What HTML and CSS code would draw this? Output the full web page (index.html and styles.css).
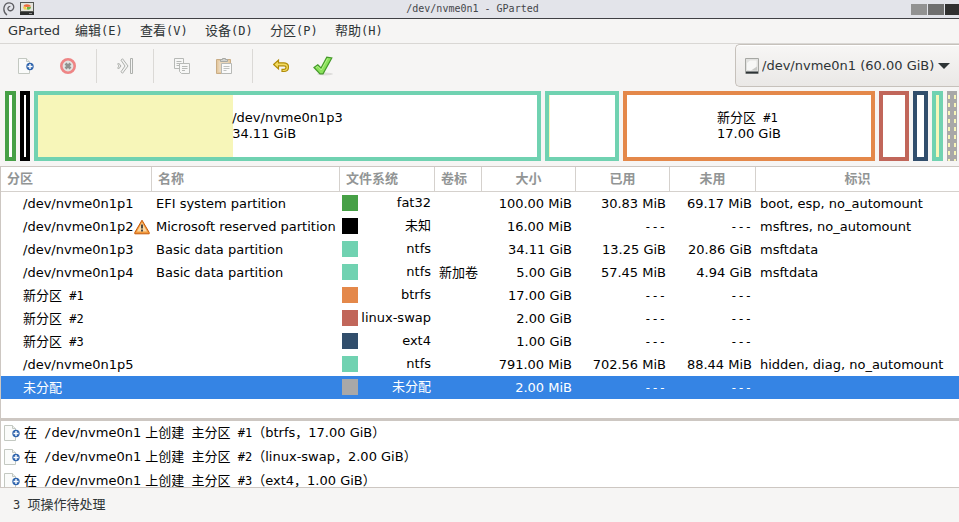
FILE: index.html
```
<!DOCTYPE html>
<html lang="zh-CN">
<head>
<meta charset="utf-8">
<title>/dev/nvme0n1 - GParted</title>
<link rel="stylesheet" href="styles.css">
</head>
<body>
<svg class="defs" aria-hidden="true">
  <symbol id="doc-new" viewBox="0 0 16 16">
    <path d="M.5.500h8l3 3v12H.5z" fill="#fafbfa" stroke="#c3c8c1"/>
    <path d="M8.500.500v3h3" fill="#eef0ed" stroke="#c3c8c1"/>
    <circle cx="12" cy="8.500" r="3.700" fill="#2f64ad"/>
    <path d="M12 6v5M9.500 8.500h5" stroke="#fff" stroke-width="1.400"/>
  </symbol>
</svg>
<header class="titlebar">
  <div class="title-icons">
    <svg width="12" height="14" viewBox="0 0 12 14" fill="none" stroke="#5d5d62" stroke-width="1.300"><path d="M4 13C1.500 11 .3 7.500 1.300 4.500 2.300 1.800 5 .6 7.500 1.100c2.600.6 3.700 3 3 5.200C9.800 8.600 7 9.500 5.500 8 4.300 6.700 5 4.500 7.300 4.300"/></svg>
    <svg width="14" height="13" viewBox="0 0 14 13"><path d="M0 0h14v13H0z" fill="#555753"/><path d="M1 1h12v8H1z" fill="#e4e4dc"/><path d="M3.500 4.500c0-3 6.500-3 7.500 0L7 5z" fill="#ef6a3a"/><path d="M3 5h3l1 2.500H4z" fill="#f3cf45"/><path d="M7 5h4c0 2-2 3-4 2.500z" fill="#6bb544"/><path d="M0 10h14v3H0z" fill="#2c2e2d"/><path d="M9 11.500h3" stroke="#888"/></svg>
  </div>
  <h1>/dev/nvme0n1 - GParted</h1>
  <div class="window-buttons">
    <button type="button" class="min" aria-label="最小化"></button>
    <button type="button" class="max" aria-label="最大化"></button>
    <button type="button" class="close" aria-label="关闭"></button>
  </div>
</header>
<nav class="menubar">
  <button type="button">GParted</button>
  <button type="button">编辑<span class="fixed">(E)</span></button>
  <button type="button">查看<span class="fixed">(V)</span></button>
  <button type="button">设备<span class="fixed">(D)</span></button>
  <button type="button">分区<span class="fixed">(P)</span></button>
  <button type="button">帮助<span class="fixed">(H)</span></button>
</nav>
<div class="toolbar">
  <button type="button" aria-label="新建"><svg width="16" height="16"><use href="#doc-new"/></svg></button>
  <button type="button" aria-label="删除"><svg width="16" height="16" viewBox="0 0 16 16"><circle cx="8" cy="8" r="6.700" fill="#e2e3e1" stroke="#ee8585" stroke-width="2.600"/><path d="M5.500 5.500l5 5M10.500 5.500l-5 5" stroke="#8f918e" stroke-width="2.600"/></svg></button>
  <span class="separator"></span>
  <button type="button" aria-label="调整大小/移动"><svg width="16" height="16" viewBox="0 0 16 16" fill="#f4f4f3" stroke="#aeb0ad"><path d="M5.500.700l5.500 7.300-5.500 7.300-1.500-1.500L8 8 4 2.200z"/><path d="M1.500 5L4 8l-2.500 3L.7 10l1.300-2L.7 6z"/><path d="M13.500.500h2v15h-2z"/></svg></button>
  <span class="separator"></span>
  <button type="button" aria-label="复制"><svg width="16" height="16" viewBox="0 0 16 16" fill="#f7f7f6" stroke="#b7b9b6"><path d="M.5.500h9v10h-9z"/><path d="M2.500 3.500h5M2.500 5.500h5M2.500 7.500h3"/><path d="M5.500 5.500h10v10h-8l-2-2z"/><path d="M8 8.500h5.500M8 10.500h5.500M8 12.500h3"/></svg></button>
  <button type="button" aria-label="粘贴"><svg width="16" height="16" viewBox="0 0 16 16"><path d="M.5 1.500h14v14H.5z" fill="#e5c9a0" stroke="#c9ac84"/><path d="M2.500 3h10v11h-10z" fill="#ead7bb"/><path d="M4.500 3.500v-2h2v-1h3v1h2v2z" fill="#d1d2cf" stroke="#a6a8a4"/><path d="M5.500 5.500h10v10h-10z" fill="#fafafa" stroke="#b7b9b6"/><path d="M7.500 8.500h6M7.500 10.500h6M7.500 12.500h3" stroke="#c0c2bf"/></svg></button>
  <span class="separator"></span>
  <button type="button" aria-label="撤销"><svg width="16" height="16" viewBox="0 0 16 16"><path d="M.6 6.500L5.500 2v2.800h5.200c3 0 4.800 1.800 4.800 4.200 0 2.600-1.800 4.500-4.500 4.500H9v-2.200h1.700c1.500 0 2.300-.8 2.300-1.800S12.300 7.800 11 7.800H5.500V11z" fill="#f3dc62" stroke="#b18c08" stroke-width="1.200"/></svg></button>
  <button type="button" aria-label="应用"><svg width="20" height="20" viewBox="0 0 20 20"><ellipse cx="12" cy="18" rx="8" ry="1.500" fill="#dedddb"/><path d="M1 11.500L4.800 8.800 8 12 13.800 1.200 18.800 2 10 17.800H7z" fill="#8ae25a" stroke="#459a2a" stroke-width="1.200"/><path d="M3 11.600l1.700-1.200L8.300 14l6.300-11.500" fill="none" stroke="#b6f08a"/></svg></button>
  <div class="device">
    <svg width="14" height="16" viewBox="0 0 14 16"><path d="M.5.500h13v15H.5z" fill="#e2e2e0" stroke="#a6a7a3"/><path d="M2 5l3-2.500h6.500v8L8 12.500H2z" fill="#f7f7f6"/><path d="M2 12l4 .5 6-4v4H2z" fill="#c9cac7"/><path d="M1 14.500h12" stroke="#2e3436" stroke-width="2"/></svg>
    <select aria-label="设备"><option>/dev/nvme0n1 (60.00 GiB)</option></select>
    <svg class="arrow" width="12" height="6" viewBox="0 0 12 6"><path d="M0 0h12L6 6z" fill="#2e3436"/></svg>
  </div>
</div>
<main>
  <div class="disk">
    <div class="part fat32" style="flex-grow:3;--used:0%"></div>
    <div class="part unknown" style="flex-grow:2;--used:0%"></div>
    <div class="part ntfs" style="flex-grow:499;--used:39%"><p>/dev/nvme0n1p3<br>34.11 GiB</p></div>
    <div class="part ntfs" style="flex-grow:66;--used:1%"></div>
    <div class="part btrfs" style="flex-grow:244;--used:0%"><p>新分区<span class="fixed"> #1</span><br>17.00 GiB</p></div>
    <div class="part swap" style="flex-grow:22;--used:0%"></div>
    <div class="part ext4" style="flex-grow:7;--used:0%"></div>
    <div class="part ntfs" style="flex-grow:3;--used:100%"></div>
    <div class="part free" style="flex-grow:2"></div>
  </div>
  <div class="table-pane">
    <table>
      <colgroup><col class="c-part"><col class="c-name"><col class="c-fs"><col class="c-label"><col class="c-size"><col class="c-size"><col class="c-unused"><col></colgroup>
      <thead><tr><th>分区</th><th>名称</th><th>文件系统</th><th>卷标</th><th class="mid">大小</th><th class="mid">已用</th><th class="mid">未用</th><th class="mid">标识</th></tr></thead>
      <tbody>
        <tr><td>/dev/nvme0n1p1</td><td>EFI system partition</td><td><div class="fs"><i class="fat32"></i>fat32</div></td><td></td><td>100.00 MiB</td><td>30.83 MiB</td><td>69.17 MiB</td><td>boot, esp, no_automount</td></tr>
        <tr><td><div class="warn">/dev/nvme0n1p2<svg width="16" height="16" viewBox="0 0 16 16"><path d="M8 1.200L15.200 13.500v1.300H.8v-1.300z" fill="#f29a3d" stroke="#c65a0a" stroke-linejoin="round"/><path d="M8 3.500L13 12.500H3z" fill="#fbd9a5"/><path d="M8 5.500v4M8 10.500v2" stroke="#3c3c3c" stroke-width="1.800"/></svg></div></td><td>Microsoft reserved partition</td><td><div class="fs"><i class="unknown"></i>未知</div></td><td></td><td>16.00 MiB</td><td><span class="fixed">---</span></td><td><span class="fixed">---</span></td><td>msftres, no_automount</td></tr>
        <tr><td>/dev/nvme0n1p3</td><td>Basic data partition</td><td><div class="fs"><i class="ntfs"></i>ntfs</div></td><td></td><td>34.11 GiB</td><td>13.25 GiB</td><td>20.86 GiB</td><td>msftdata</td></tr>
        <tr><td>/dev/nvme0n1p4</td><td>Basic data partition</td><td><div class="fs"><i class="ntfs"></i>ntfs</div></td><td>新加卷</td><td>5.00 GiB</td><td>57.45 MiB</td><td>4.94 GiB</td><td>msftdata</td></tr>
        <tr><td>新分区<span class="fixed"> #1</span></td><td></td><td><div class="fs"><i class="btrfs"></i>btrfs</div></td><td></td><td>17.00 GiB</td><td><span class="fixed">---</span></td><td><span class="fixed">---</span></td><td></td></tr>
        <tr><td>新分区<span class="fixed"> #2</span></td><td></td><td><div class="fs"><i class="swap"></i>linux-swap</div></td><td></td><td>2.00 GiB</td><td><span class="fixed">---</span></td><td><span class="fixed">---</span></td><td></td></tr>
        <tr><td>新分区<span class="fixed"> #3</span></td><td></td><td><div class="fs"><i class="ext4"></i>ext4</div></td><td></td><td>1.00 GiB</td><td><span class="fixed">---</span></td><td><span class="fixed">---</span></td><td></td></tr>
        <tr><td>/dev/nvme0n1p5</td><td></td><td><div class="fs"><i class="ntfs"></i>ntfs</div></td><td></td><td>791.00 MiB</td><td>702.56 MiB</td><td>88.44 MiB</td><td>hidden, diag, no_automount</td></tr>
        <tr class="selected"><td>未分配</td><td></td><td><div class="fs"><i class="free"></i>未分配</div></td><td></td><td>2.00 MiB</td><td><span class="fixed">---</span></td><td><span class="fixed">---</span></td><td></td></tr>
      </tbody>
    </table>
  </div>
  <ul class="operations">
    <li><svg width="16" height="16"><use href="#doc-new"/></svg><span>在<span class="fixed"> /</span>dev/nvme0n1 上创建<span class="fixed"> </span>主分区<span class="fixed"> #1</span>（btrfs，17.00 GiB）</span></li>
    <li><svg width="16" height="16"><use href="#doc-new"/></svg><span>在<span class="fixed"> /</span>dev/nvme0n1 上创建<span class="fixed"> </span>主分区<span class="fixed"> #2</span>（linux-swap，2.00 GiB）</span></li>
    <li><svg width="16" height="16"><use href="#doc-new"/></svg><span>在<span class="fixed"> /</span>dev/nvme0n1 上创建<span class="fixed"> </span>主分区<span class="fixed"> #3</span>（ext4，1.00 GiB）</span></li>
  </ul>
</main>
<footer class="status"><span><span class="fixed">3 </span>项操作待处理</span></footer>
</body>
</html>
```
FILE: styles.css
```
* { box-sizing: border-box; }

body {
  margin: 0;
  height: 100vh;
  display: flex;
  flex-direction: column;
  overflow: hidden;
  background: #f6f5f4;
  color: #2e3436;
  font: 13px/16px "DejaVu Sans", "Noto Sans CJK SC", sans-serif;
}

button, select {
  font: inherit;
  color: inherit;
  background: none;
  border: 0;
  margin: 0;
  padding: 0;
}

svg { display: block; flex: none; }
.defs { position: absolute; width: 0; height: 0; }
.fixed { font-family: "DejaVu Sans Mono", monospace; font-size: 12px; line-height: 12px; white-space: pre; }

.titlebar {
  flex: none;
  height: 19px;
  display: flex;
  align-items: center;
  justify-content: space-between;
  padding-left: 3px;
  background: #e3e4ea;
  border-bottom: 1px solid #404044;
}
.titlebar h1 { margin: 0; color: #45464a; font: 10px/14px "DejaVu Sans Mono", monospace; }
.title-icons { display: flex; gap: 5px; }
.window-buttons { display: flex; gap: 1px; }
.window-buttons button { width: 16px; height: 11px; }
.min { background: #929292; }
.max { background: #6f6f6f; }
.window-buttons .close { width: 14px; background: #303030; }

.menubar {
  flex: none;
  display: flex;
  height: 25px;
  border-bottom: 1px solid #d9d7d4;
}
.menubar button { min-width: 65px; padding: 0 7px 0 8px; text-align: left; white-space: nowrap; }

.toolbar { flex: none; display: flex; align-items: center; height: 43px; padding-left: 5px; }
.toolbar button { width: 42px; height: 34px; display: flex; align-items: center; justify-content: center; }
.separator { width: 1px; height: 34px; margin: 0 7px; background: #dbd9d6; }
.device {
  display: flex;
  align-items: center;
  align-self: stretch;
  margin-left: auto;
  padding: 0 9px;
  gap: 3px;
  border: 1px solid #c6c1bb;
  border-right: 0;
  border-radius: 5px 0 0 5px;
  background: linear-gradient(#f7f6f5, #eae8e6);
  box-shadow: inset 0 1px #fff;
}
.device select { appearance: none; outline: 0; }

main { flex: 1; display: flex; flex-direction: column; min-height: 0; }

.disk { display: flex; gap: 4px; height: 70px; margin: 4px 2px 5px 5px; flex: none; }
.part {
  flex: 1 1 0;
  min-width: 0;
  display: flex;
  align-items: center;
  justify-content: center;
  border: 4px solid var(--fs);
  background: linear-gradient(to right, #f7f6b9 var(--used), #fff var(--used)) padding-box;
  color: #000;
}
.part p { margin: 0; white-space: nowrap; }
.part.free {
  background:
    repeating-linear-gradient(#a8a8a8 0 4px, #f7f6b9 4px 8px) 1px 0 / 2px 100% no-repeat border-box,
    repeating-linear-gradient(#a8a8a8 0 4px, #f7f6b9 4px 8px) 7px 0 / 2px 100% no-repeat border-box,
    #a8a8a8 border-box;
  border-color: transparent;
}

.fat32 { --fs: #46a046; }
.unknown { --fs: #000; }
.ntfs { --fs: #70d2b1; }
.btrfs { --fs: #e4884a; }
.swap { --fs: #c1665a; }
.ext4 { --fs: #314e6c; }
.free { --fs: #a8a8a8; }

.table-pane {
  flex: 1;
  min-height: 0;
  overflow: hidden;
  background: #fff;
  color: #000;
  border-top: 1px solid #cdc7c2;
  border-left: 1px solid #cdc7c2;
}
table { width: 100%; table-layout: fixed; border-collapse: separate; border-spacing: 0; }
.c-part { width: 151px; }
.c-name { width: 188px; }
.c-fs { width: 95px; }
.c-label { width: 47px; }
.c-size { width: 94px; }
.c-unused { width: 86px; }
th {
  height: 25px;
  padding: 0 6px;
  text-align: left;
  color: #929595;
  border-right: 1px solid #d5d1cd;
  border-bottom: 1px solid #d5d1cd;
}
th:last-child { border-right: 0; }
th.mid { text-align: center; }
td { height: 23px; padding: 0 4px; white-space: nowrap; }
td:first-child { padding: 0 0 0 22px; }
td:nth-child(3) { padding: 0 4px 1px 2px; }
td:nth-child(n+5):nth-child(-n+7) { text-align: right; }
.fs { display: flex; align-items: center; justify-content: space-between; }
.fs i { width: 16px; height: 16px; background: var(--fs); }
.warn { display: flex; align-items: center; }
.selected td { background: #3584e4; color: #fff; }

.operations {
  flex: none;
  height: 70px;
  margin: 0;
  padding: 0 0 0 3px;
  overflow: hidden;
  list-style: none;
  background: #fff;
  color: #000;
  border-top: 3px solid #cdc7c2;
  border-bottom: 1px solid #cdc7c2;
  border-left: 1px solid #cdc7c2;
}
.operations li { display: flex; align-items: center; gap: 4px; height: 24px; white-space: nowrap; }

.status { flex: none; height: 34px; display: flex; align-items: center; padding: 0 13px; }
```
